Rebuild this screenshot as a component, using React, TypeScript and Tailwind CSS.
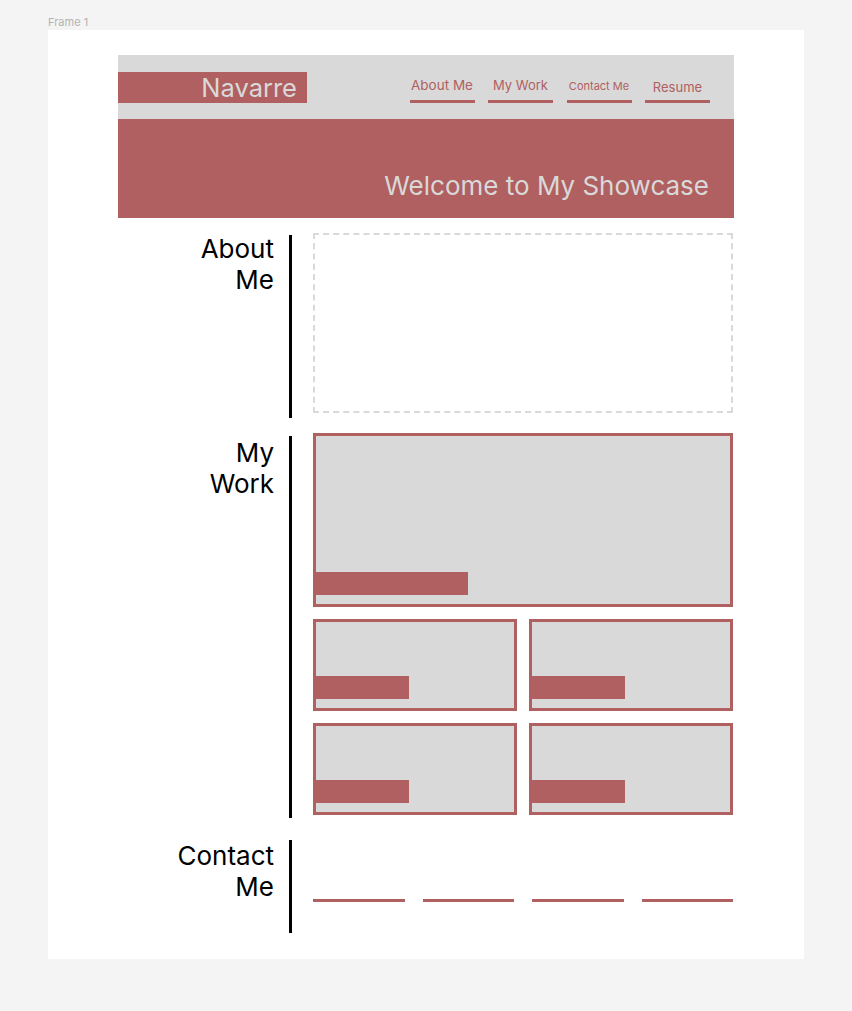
import React from 'react'

const RED = 'bg-[#b06060]'

const navItems = [
  { label: 'About Me', cls: 'text-[13.5px]' },
  { label: 'My Work', cls: 'text-[13px]' },
  { label: 'Contact Me', cls: 'text-[11px] pt-[1px]' },
  { label: 'Resume', cls: 'text-[13px] pt-[2px]' },
]

function Header() {
  return (
    <header>
      {/* top bar */}
      <div className="flex h-[64px] items-start justify-between bg-[#d9d9d9]">
        <div className={`mt-[17px] h-[31px] w-[189px] ${RED} pr-[10px] text-right text-[25.5px] leading-[31px] text-[#d9d9d9]`}>
          Navarre
        </div>
        <nav className="mt-[22px] mr-[24px] flex gap-[13.5px]">
          {navItems.map(item => (
            <a key={item.label} href="#" className="flex h-[26px] w-[65px] flex-col items-center justify-between">
              <span className={`${item.cls} leading-[16px] text-[#b06060]`}>{item.label}</span>
              <span className={`h-[3px] w-full ${RED}`} />
            </a>
          ))}
        </nav>
      </div>

      {/* hero */}
      <div className={`flex h-[99px] items-end justify-end ${RED} pr-[25px] pb-[16px]`}>
        <h1 className="text-[26px] leading-[32px] text-[#d9d9d9]">Welcome to My Showcase</h1>
      </div>
    </header>
  )
}

function Section({ title, barClass, labelClass = '', className = '', children }: {
  title: string[]
  barClass: string
  labelClass?: string
  className?: string
  children: React.ReactNode
}) {
  return (
    <section className={`flex items-start ${className}`}>
      <h2 className={`w-[156px] shrink-0 text-right text-[26px] leading-[31px] text-black ${labelClass}`}>
        {title.map(t => <div key={t}>{t}</div>)}
      </h2>
      <div className={`ml-[15px] w-[3px] shrink-0 bg-black ${barClass}`} />
      <div className="ml-[21px] w-[420px]">{children}</div>
    </section>
  )
}

function WorkCard({ h, bar }: { h: string; bar: string }) {
  return (
    <div className={`flex ${h} flex-col justify-end border-[3px] border-[#b06060] bg-[#d9d9d9] pb-[9px]`}>
      <div className={`-ml-[3px] h-[23px] ${bar} ${RED}`} />
    </div>
  )
}

export default function App() {
  return (
    <div className="min-h-screen bg-[#f4f4f4] pt-[14px] pl-[48px]" style={{ fontFamily: 'Inter, "Liberation Sans", sans-serif' }}>
      <p className="text-[11px] leading-[16px] text-[#b3b3b3]">Frame 1</p>

      <main className="h-[929px] w-[756px] bg-white px-[70px] pt-[25px]">
        <Header />

        <div className="pt-[15px]">
          <Section title={['About', 'Me']} barClass="mt-[2px] h-[183px]">
            <div className="h-[180px] border-2 border-dashed border-[#d9d9d9]" />
          </Section>

          <Section title={['My', 'Work']} className="mt-[15px]" labelClass="pt-[4px]" barClass="mt-[3px] h-[382px]">
            <div className="flex flex-col gap-[12px]">
              <WorkCard h="h-[174px]" bar="w-[155px]" />
              <div className="grid grid-cols-2 gap-[12px]">
                <WorkCard h="h-[92px]" bar="w-[96px]" />
                <WorkCard h="h-[92px]" bar="w-[96px]" />
              </div>
              <div className="grid grid-cols-2 gap-[12px]">
                <WorkCard h="h-[92px]" bar="w-[96px]" />
                <WorkCard h="h-[92px]" bar="w-[96px]" />
              </div>
            </div>
          </Section>

          <Section title={['Contact', 'Me']} className="mt-[22px]" barClass="h-[93px]">
            <div className="grid grid-cols-4 gap-[18px] pt-[59px]">
              {[0, 1, 2, 3].map(i => (
                <div key={i} className={`h-[3px] ${RED}`} />
              ))}
            </div>
          </Section>
        </div>
      </main>
    </div>
  )
}
